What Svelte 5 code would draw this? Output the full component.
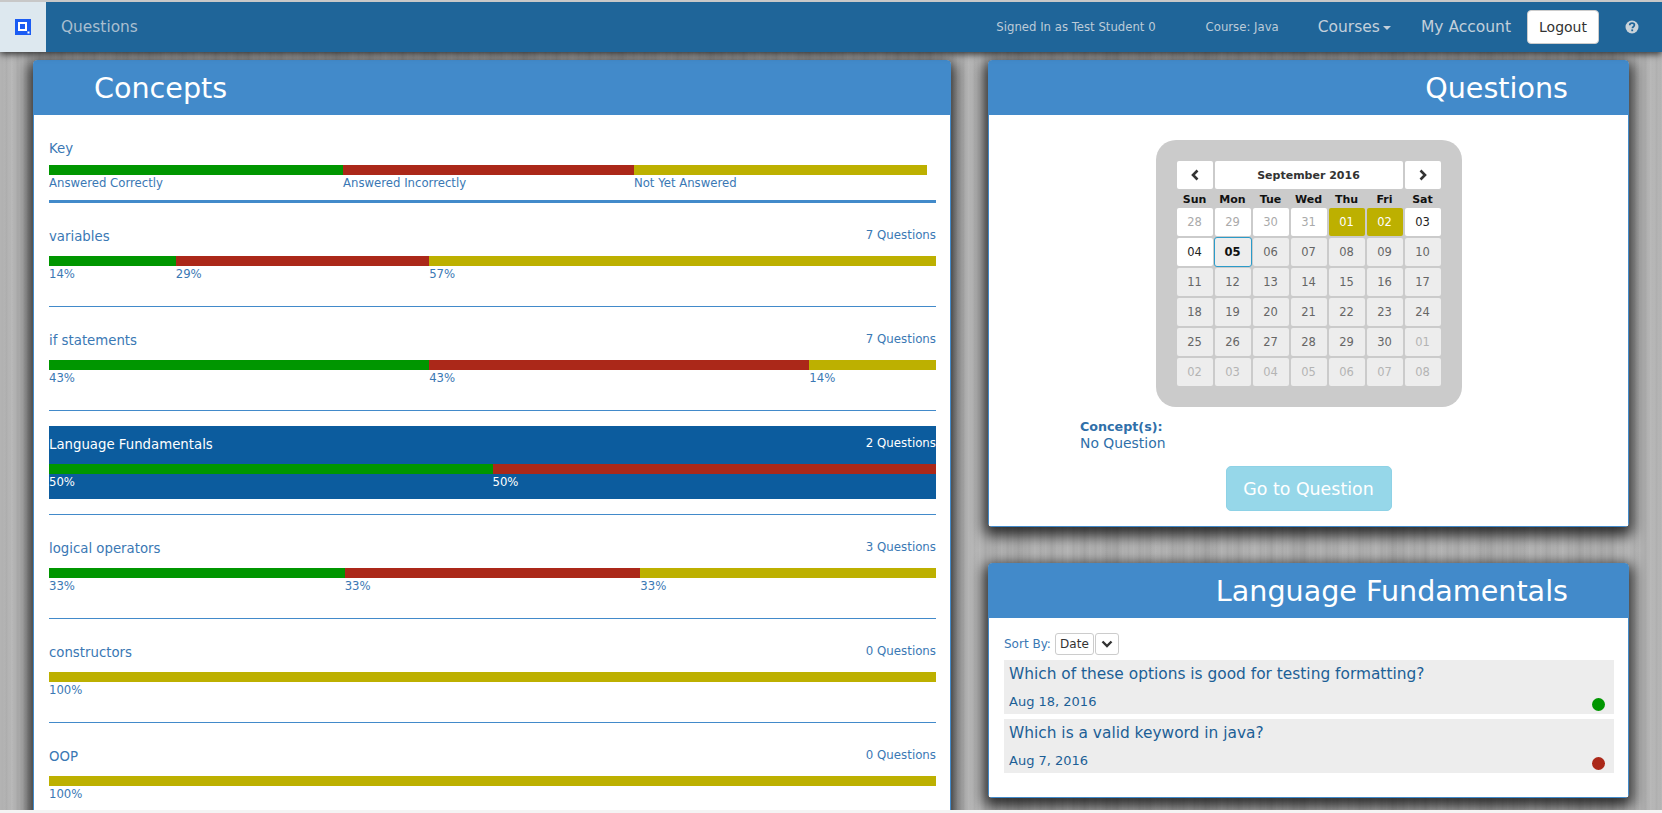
<script lang="ts">
	const concepts = [
		{ name: 'variables', count: 7, parts: [1, 2, 4] },
		{ name: 'if statements', count: 7, parts: [3, 3, 1] },
		{ name: 'Language Fundamentals', count: 2, parts: [1, 1, 0], active: true },
		{ name: 'logical operators', count: 3, parts: [1, 1, 1] },
		{ name: 'constructors', count: 0, parts: [0, 0, 1] },
		{ name: 'OOP', count: 0, parts: [0, 0, 1] }
	];

	const kinds = ['right', 'wrong', 'todo'];

	const segments = (parts: number[]) => {
		const total = parts.reduce((sum, part) => sum + part, 0);
		return parts
			.map((part, i) => ({ kind: kinds[i], pct: (part / total) * 100 }))
			.filter((seg) => seg.pct > 0);
	};

	const keyParts = [
		{ kind: 'right', label: 'Answered Correctly', width: 33.15 },
		{ kind: 'wrong', label: 'Answered Incorrectly', width: 32.8 },
		{ kind: 'todo', label: 'Not Yet Answered', width: 33.05 }
	];

	const weekdays = ['Sun', 'Mon', 'Tue', 'Wed', 'Thu', 'Fri', 'Sat'];

	const days = [
		['28', 'off'], ['29', 'off'], ['30', 'off'], ['31', 'off'], ['01', 'due'], ['02', 'due'], ['03', 'open'],
		['04', 'open'], ['05', 'today'], ['06', ''], ['07', ''], ['08', ''], ['09', ''], ['10', ''],
		['11', ''], ['12', ''], ['13', ''], ['14', ''], ['15', ''], ['16', ''], ['17', ''],
		['18', ''], ['19', ''], ['20', ''], ['21', ''], ['22', ''], ['23', ''], ['24', ''],
		['25', ''], ['26', ''], ['27', ''], ['28', ''], ['29', ''], ['30', ''], ['01', 'faded'],
		['02', 'faded'], ['03', 'faded'], ['04', 'faded'], ['05', 'faded'], ['06', 'faded'], ['07', 'faded'], ['08', 'faded']
	];

	const questions = [
		{ title: 'Which of these options is good for testing formatting?', date: 'Aug 18, 2016', kind: 'right' },
		{ title: 'Which is a valid keyword in java?', date: 'Aug 7, 2016', kind: 'wrong' }
	];
</script>

<div class="page">
	<nav class="navbar">
		<div class="brand">
			<svg width="16" height="16" viewBox="0 0 16 16" aria-hidden="true">
				<rect width="16" height="16" fill="#1b5cf3" />
				<rect x="3" y="3" width="9" height="9" fill="#fff" />
				<rect x="5" y="5" width="5" height="5" fill="#1b5cf3" />
				<rect x="12.5" y="12.5" width="2" height="2" fill="#fff" />
			</svg>
		</div>
		<a class="nav-title">Questions</a>
		<div class="nav-right">
			<span class="signed">Signed In as Test Student 0</span>
			<span class="course">Course: Java</span>
			<a class="nav-link courses">Courses<span class="caret"></span></a>
			<a class="nav-link account">My Account</a>
			<button class="logout" type="button">Logout</button>
			<svg class="help" width="14" height="14" viewBox="0 0 14 14" aria-hidden="true">
				<circle cx="7" cy="7" r="6.5" fill="#c9d3da" />
				<path d="M4.7 5.3c0-1.3 1-2.1 2.4-2.1s2.3.8 2.3 1.9c0 1.7-2 1.6-2 3.1" fill="none" stroke="#1f6599" stroke-width="1.7" />
				<rect x="6.3" y="9.4" width="1.8" height="1.8" fill="#1f6599" />
			</svg>
		</div>
	</nav>

	<main class="columns">
		<section class="panel concepts">
			<h2 class="panel-head">Concepts</h2>
			<div class="panel-body">
				<div class="key">
					<div class="row-title">Key</div>
					<div class="bars">
						{#each keyParts as part}
							<div class="seg" style="width: {part.width}%">
								<div class="fill {part.kind}"></div>
								<div class="seg-label">{part.label}</div>
							</div>
						{/each}
					</div>
				</div>
				<div class="rule thick"></div>

				{#each concepts as concept, i}
					<div class="concept" class:active={concept.active}>
						<div class="row-title">
							<span>{concept.name}</span>
							<span class="count">{concept.count} Questions</span>
						</div>
						<div class="bars">
							{#each segments(concept.parts) as seg}
								<div class="seg" style="width: {seg.pct}%">
									<div class="fill {seg.kind}"></div>
									<div class="seg-label">{Math.round(seg.pct)}%</div>
								</div>
							{/each}
						</div>
					</div>
					{#if i < concepts.length - 1}
						<div class="rule"></div>
					{/if}
				{/each}
			</div>
		</section>

		<div class="side">
			<section class="panel calendar-panel">
				<h2 class="panel-head end">Questions</h2>
				<div class="panel-body calendar-body">
					<div class="calendar">
						<div class="cal-head">
							<button class="cal-btn" type="button" aria-label="Previous month">
								<svg width="10" height="12" viewBox="0 0 10 12"><path d="M7.5 1.5 3 6l4.5 4.5" fill="none" stroke="#333" stroke-width="2.6" /></svg>
							</button>
							<button class="cal-btn month" type="button">September 2016</button>
							<button class="cal-btn" type="button" aria-label="Next month">
								<svg width="10" height="12" viewBox="0 0 10 12"><path d="M2.5 1.5 7 6l-4.5 4.5" fill="none" stroke="#333" stroke-width="2.6" /></svg>
							</button>
						</div>
						<div class="cal-grid">
							{#each weekdays as day}
								<div class="weekday">{day}</div>
							{/each}
							{#each days as [day, state]}
								<div class="day {state}">{day}</div>
							{/each}
						</div>
					</div>
					<div class="concept-info">
						<strong>Concept(s):</strong>
						<span>No Question</span>
					</div>
					<button class="go" type="button">Go to Question</button>
				</div>
			</section>

			<section class="panel list-panel">
				<h2 class="panel-head end">Language Fundamentals</h2>
				<div class="panel-body list-body">
					<div class="sort">
						<span>Sort By:</span>
						<span class="sort-value">Date</span>
						<span class="sort-arrow">
							<svg width="12" height="10" viewBox="0 0 12 10"><path d="M1.5 2.5 6 7l4.5-4.5" fill="none" stroke="#333" stroke-width="2.4" /></svg>
						</span>
					</div>
					{#each questions as question}
						<div class="question">
							<div class="q-title">{question.title}</div>
							<div class="q-foot">
								<span>{question.date}</span>
								<span class="dot {question.kind}"></span>
							</div>
						</div>
					{/each}
				</div>
			</section>
		</div>
	</main>
</div>

<style>
	:global(body) {
		background: #f4f4f4;
		overflow: hidden;
	}

	.page {
		height: 810px;
		overflow: hidden;
		font-family: 'DejaVu Sans', sans-serif;
		color: #3a78b4;
		background-color: #b2b2b2;
		background-image:
			repeating-linear-gradient(90deg, rgba(255, 255, 255, 0.05) 0 1px, transparent 2px 5px, rgba(0, 0, 0, 0.03) 6px 7px, transparent 8px 11px),
			repeating-linear-gradient(90deg, rgba(0, 0, 0, 0.03) 0, transparent 5px, rgba(255, 255, 255, 0.04) 13px, transparent 19px, rgba(0, 0, 0, 0.03) 31px),
			repeating-linear-gradient(90deg, rgba(255, 255, 255, 0.03) 0, transparent 17px, rgba(0, 0, 0, 0.03) 43px, transparent 61px, rgba(255, 255, 255, 0.03) 97px);
		border-top: 2px solid #c8c8c8;
		box-sizing: border-box;
	}

	.navbar {
		position: relative;
		z-index: 2;
		display: flex;
		align-items: center;
		height: 50px;
		background: #1f6599;
		box-shadow: 0 2px 7px rgba(0, 0, 0, 0.75);
	}

	.brand {
		display: flex;
		align-items: center;
		justify-content: center;
		width: 46px;
		height: 100%;
		background: #dde8ef;
	}

	.nav-title {
		margin-left: 15px;
		font-size: 15.4px;
		color: #a9bfd0;
	}

	.nav-right {
		display: flex;
		align-items: center;
		margin-left: auto;
		padding-right: 23px;
		color: #bccbd8;
	}

	.signed,
	.course {
		font-size: 11.7px;
	}

	.course {
		margin-left: 50px;
	}

	.nav-link {
		font-size: 15.5px;
		color: #c3d0db;
	}

	.courses {
		margin-left: 39px;
	}

	.caret {
		display: inline-block;
		margin-left: 3px;
		vertical-align: middle;
		border-top: 4px solid #c3d0db;
		border-left: 4px solid transparent;
		border-right: 4px solid transparent;
	}

	.account {
		margin-left: 30px;
	}

	.logout {
		width: 72px;
		height: 34px;
		margin-left: 16px;
		padding: 0;
		border: 1px solid #ccc;
		border-radius: 4px;
		background: #fff;
		color: #333;
		font: 14px 'DejaVu Sans', sans-serif;
	}

	.help {
		margin-left: 26px;
	}

	.columns {
		display: grid;
		grid-template-columns: 918px 641px;
		column-gap: 37px;
		padding: 8px 33px 0;
		align-items: start;
	}

	.side {
		display: flex;
		flex-direction: column;
		gap: 36px;
	}

	.panel {
		border: 1px solid #428aca;
		border-radius: 4px;
		background: #fff;
		box-shadow: 0 5px 14px 4px rgba(0, 0, 0, 0.75);
	}

	.panel-head {
		height: 54px;
		margin: 0;
		padding: 0 0 0 60px;
		background: #428aca;
		color: #fff;
		font-size: 28.6px;
		font-weight: 400;
		line-height: 54px;
	}

	.panel-head.end {
		padding: 0 60px 0 0;
		text-align: right;
	}

	.panel-body {
		background: #fff;
	}

	.concepts .panel-body {
		padding: 12px 14px 0 15px;
		height: 760px;
		box-sizing: border-box;
	}

	.row-title {
		display: flex;
		justify-content: space-between;
		height: 38px;
		font-size: 13.3px;
		line-height: 37px;
		white-space: nowrap;
	}

	.key .row-title {
		line-height: 43px;
	}

	.count {
		font-size: 11.8px;
		line-height: 35px;
	}

	.bars {
		display: flex;
	}

	.seg {
		min-width: 0;
	}

	.fill {
		height: 10px;
	}

	.right {
		background-color: #009600;
	}

	.wrong {
		background-color: #ab2819;
	}

	.todo {
		background-color: #bdb000;
	}

	.seg-label {
		font-size: 11.7px;
		line-height: 16px;
		white-space: nowrap;
	}

	.key {
		height: 63px;
	}

	.concept {
		height: 73px;
	}

	.concept.active {
		background: #0c5c9e;
		color: #fff;
	}

	.rule {
		height: 1px;
		margin: 15px 0;
		background: #428aca;
	}

	.rule.thick {
		height: 3px;
		margin: 10px 0 15px;
	}

	.calendar-body {
		display: flex;
		flex-direction: column;
		height: 411px;
		box-sizing: border-box;
		padding-top: 25px;
	}

	.calendar {
		align-self: center;
		box-sizing: border-box;
		width: 306px;
		height: 267px;
		padding: 21px;
		border-radius: 20px;
		background: #cbcbcb;
		font-size: 11.5px;
		color: #333;
	}

	.cal-head {
		display: flex;
		gap: 2px;
	}

	.cal-btn {
		display: flex;
		align-items: center;
		justify-content: center;
		width: 36px;
		height: 28px;
		padding: 0;
		border: 0;
		border-radius: 2px;
		background: #fff;
		color: #333;
		font: 700 11px 'DejaVu Sans', sans-serif;
	}

	.cal-btn.month {
		flex: 1;
	}

	.cal-grid {
		display: grid;
		grid-template-columns: repeat(7, 36px);
		grid-template-rows: 17px repeat(6, 28px);
		gap: 2px;
	}

	.weekday {
		color: #111;
		font-size: 11px;
		font-weight: 700;
		line-height: 22px;
		text-align: center;
	}

	.day {
		border-radius: 2px;
		background: #ededed;
		color: #666;
		line-height: 28px;
		text-align: center;
	}

	.day.off,
	.day.open {
		background: #fff;
	}

	.day.off {
		color: #aaa;
	}

	.day.open {
		color: #222;
	}

	.day.due {
		background: #bdb000;
		color: #fff;
	}

	.day.today {
		box-sizing: border-box;
		margin: -1px;
		width: 38px;
		height: 30px;
		border: 1px solid #2b9bc9;
		border-radius: 3px;
		color: #111;
		font-weight: 700;
	}

	.day.faded {
		color: #b4b4b4;
	}

	.concept-info {
		display: flex;
		flex-direction: column;
		margin: 11px 0 0 91px;
		font-size: 13.9px;
		line-height: 17px;
		color: #2f6fa9;
	}

	.concept-info strong {
		font-size: 12.7px;
	}

	.go {
		align-self: center;
		width: 166px;
		height: 45px;
		margin-top: 14px;
		border: 1px solid #8ed2e6;
		border-radius: 5px;
		background: #96d7e9;
		color: #fff;
		font: 17.4px 'DejaVu Sans', sans-serif;
	}

	.list-body {
		box-sizing: border-box;
		height: 179px;
		padding: 15px 14px 15px 15px;
	}

	.sort {
		display: flex;
		align-items: center;
		height: 22px;
		margin-bottom: 5px;
		font-size: 12px;
	}

	.sort-value,
	.sort-arrow {
		display: flex;
		align-items: center;
		justify-content: center;
		box-sizing: border-box;
		height: 22px;
		border: 1px solid #ccc;
		border-radius: 3px;
		background: #fff;
		color: #333;
	}

	.sort-value {
		width: 39px;
		margin-left: 4px;
	}

	.sort-arrow {
		width: 24px;
		margin-left: 1px;
	}

	.question {
		box-sizing: border-box;
		height: 54px;
		margin-top: 5px;
		padding: 3px 5px 0;
		background: #ededed;
		color: #1c5f96;
	}

	.q-title {
		font-size: 15.4px;
		line-height: 22px;
	}

	.q-foot {
		display: flex;
		align-items: center;
		justify-content: space-between;
		padding: 6px 4px 0 0;
		font-size: 13px;
	}

	.dot {
		width: 13px;
		height: 13px;
		margin-top: 7px;
		border-radius: 50%;
	}
</style>
